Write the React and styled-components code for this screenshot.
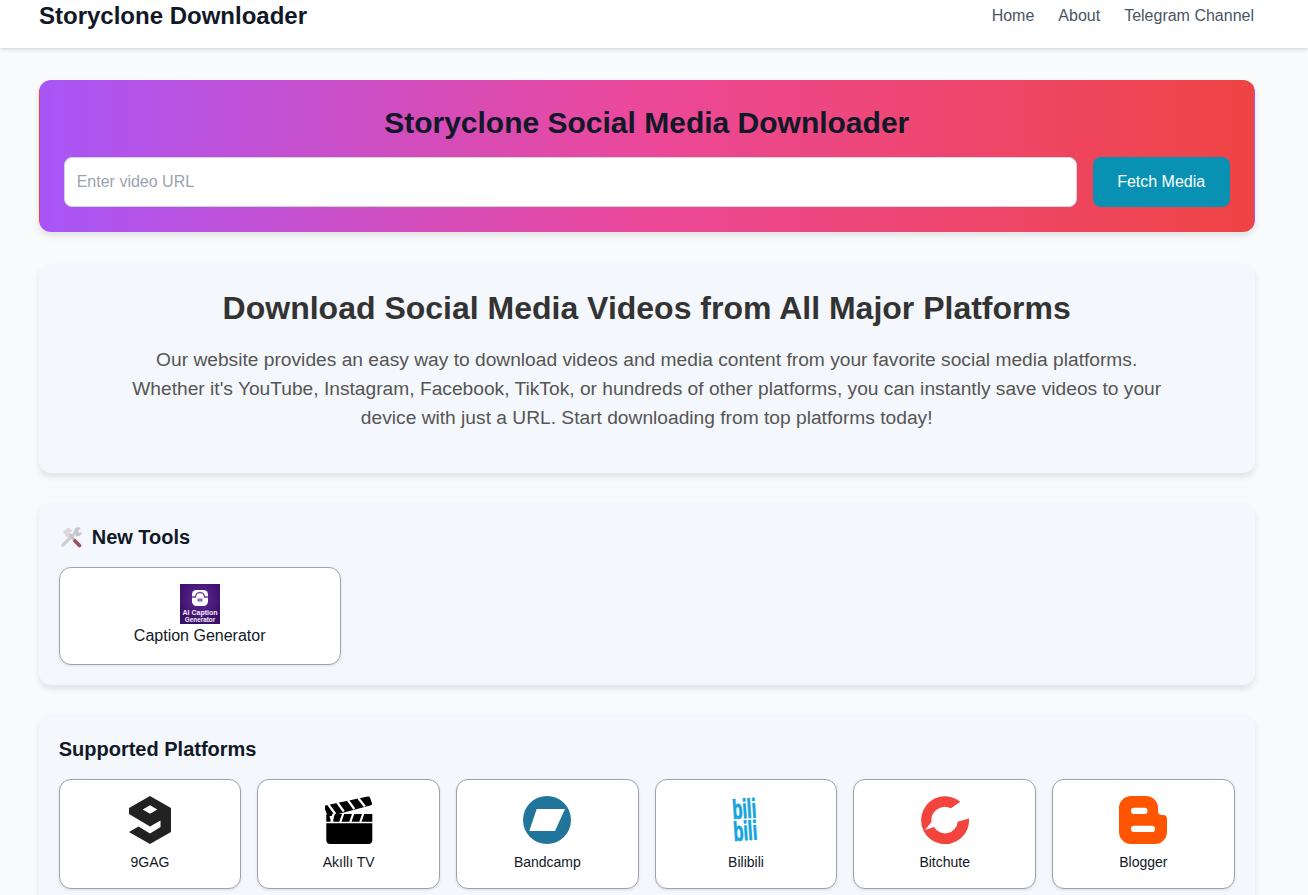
import React from "react";
import styled, { createGlobalStyle } from "styled-components";

const GlobalStyle = createGlobalStyle`
  * {
    box-sizing: border-box;
  }

  html,
  body {
    margin: 0;
    height: 895px;
    overflow: hidden;
    background-color: #f9fafb;
    font-family: "Liberation Sans", Arial, sans-serif;
  }
`;

const NineGagIcon = () => (
  <svg viewBox="0 0 48 48" width="48" height="48">
    <path
      fill="#222222"
      fillRule="evenodd"
      d="M24 0L45 12V36L24 48L3 36L12.5 30.5L24 37.5L34.5 31V24.5L24 30.5L3 18V12ZM24 9.3L16.7 13.5L24 17.7L31.3 13.5Z"
    />
  </svg>
);

const ClapperIcon = () => (
  <svg viewBox="0.7 0 48 48" width="48" height="48">
    <path d="M1 9.5L43.5 0.5Q45 0 45.6 1.5L47.8 7.5Q48 8.8 46.8 9.2L4.6 20.5Q3.3 20.8 3 19.5L0 11.5Q-0.2 10 1 9.5Z" />
    <path d="M2 18.5H4.5L7 25.7H2ZM9 18H48V25.7H9Z" />
    <path d="M2 27.3H48V44A4 4 0 0 1 44 48H6A4 4 0 0 1 2 44Z" />
    <g stroke="#fff" strokeWidth="2.2">
      <path d="M4 8.5L11 18" />
      <path d="M13 6.5L19.5 15.5" />
      <path d="M23.5 4L30 13" />
      <path d="M34 2L40.5 10.5" />
      <path d="M7 26L9.5 17.5" />
      <path d="M16 26L19 17.5" />
      <path d="M26 26L29 17.5" />
      <path d="M36 26L39 17.5" />
    </g>
  </svg>
);

const BandcampIcon = () => (
  <svg viewBox="0 0 48 48" width="48" height="48">
    <circle cx="24" cy="24" r="24" fill="#21759b" />
    <path fill="#fff" d="M13.7 13H42L32 35H6.3Z" />
  </svg>
);

const BiliSvg = styled.svg`
  overflow: visible;
`;

const BiliText = styled.text`
  font-family: "Liberation Sans", Arial, sans-serif;
  font-size: 17px;
  font-weight: 700;
  fill: #13a4dc;
  stroke: #13a4dc;
  stroke-width: 0.5px;
`;

const BilibiliIcon = () => (
  <BiliSvg viewBox="0 0 48 48" width="48" height="48">
    <BiliText transform="translate(11 23) rotate(-4) scale(0.97 1.6)">bili</BiliText>
    <BiliText transform="translate(12 45) rotate(-4) scale(0.97 1.6)">bili</BiliText>
  </BiliSvg>
);

const BitchuteIcon = () => (
  <svg viewBox="0 0 48 48" width="48" height="48">
    <path
      fill="#f2433d"
      d="M39.3 5.7A24 24 0 1 0 48 22.5L36.7 25.7A12.7 12.7 0 0 1 13 31L4 34L10.5 26A13.5 13.5 0 0 1 30 12.3Z"
    />
  </svg>
);

const BloggerIcon = () => (
  <svg viewBox="0 0 48 48" width="48" height="48">
    <path
      fill="#ff5500"
      d="M12 0H27A12 12 0 0 1 39 12V15A4 4 0 0 0 43 19H44A4 4 0 0 1 48 23V36A12 12 0 0 1 36 48H12A12 12 0 0 1 0 36V12A12 12 0 0 1 12 0Z"
    />
    <rect x="12" y="11.7" width="16.5" height="6.3" rx="3.1" fill="#fff" />
    <rect x="12" y="29.7" width="24" height="6.3" rx="3.1" fill="#fff" />
  </svg>
);

const ToolsEmoji = () => (
  <svg viewBox="0 0 22 22" width="22" height="22">
    <path d="M2 19L14 7" stroke="#cfcfd6" strokeWidth="3.4" strokeLinecap="round" />
    <path d="M13 5A4.5 4.5 0 0 1 20 2L17 5L18 7L21 6A4.5 4.5 0 0 1 15 10Z" fill="#c4c4ce" />
    <path d="M9 9L14 14.5" stroke="#cdbfc8" strokeWidth="3.2" strokeLinecap="round" />
    <path d="M2 6L7 1.5L12 5L9 6L8.5 10L6 11.5Z" fill="#dcd6de" />
    <path d="M14 15L18.5 19.5" stroke="#97505a" strokeWidth="3.6" strokeLinecap="round" />
  </svg>
);

const LogoText = styled.text`
  font-family: "Liberation Sans", Arial, sans-serif;
  font-size: ${(props) => props.$size}px;
  font-weight: 700;
  fill: #f3ecf8;
  text-anchor: middle;
`;

const CaptionLogo = () => (
  <svg viewBox="0 0 40 40" width="40" height="40">
    <defs>
      <radialGradient id="captionBg" cx="50%" cy="38%" r="60%">
        <stop offset="0%" stopColor="#5f2a95" />
        <stop offset="100%" stopColor="#3a0f68" />
      </radialGradient>
    </defs>
    <rect width="40" height="40" fill="url(#captionBg)" />
    <rect x="12" y="6" width="16" height="16" rx="4.5" fill="#fff" />
    <path d="M12 13H15.5A4.5 4.5 0 0 1 24.5 13H28" fill="none" stroke="#6a3c9c" strokeWidth="1.3" />
    <rect x="17.5" y="14.5" width="5" height="3" fill="#8a68b4" />
    <LogoText x="20" y="30.5" $size="7">
      AI Caption
    </LogoText>
    <LogoText x="20" y="37.5" $size="6.4">
      Generator
    </LogoText>
  </svg>
);

const PLATFORMS = [
  { name: "9GAG", icon: <NineGagIcon /> },
  { name: "Akıllı TV", icon: <ClapperIcon /> },
  { name: "Bandcamp", icon: <BandcampIcon /> },
  { name: "Bilibili", icon: <BilibiliIcon /> },
  { name: "Bitchute", icon: <BitchuteIcon /> },
  { name: "Blogger", icon: <BloggerIcon /> },
];

const App = () => {
  return (
    <>
      <GlobalStyle />
      <Header>
        <Brand>Storyclone Downloader</Brand>
        <Nav>
          <NavLink href="#home">Home</NavLink>
          <NavLink href="#about">About</NavLink>
          <NavLink href="#telegram">Telegram Channel</NavLink>
        </Nav>
      </Header>
      <Main>
        <Hero>
          <HeroTitle>Storyclone Social Media Downloader</HeroTitle>
          <SearchRow>
            <UrlInput type="text" placeholder="Enter video URL" />
            <FetchButton type="button">Fetch Media</FetchButton>
          </SearchRow>
        </Hero>

        <InfoCard>
          <InfoTitle>Download Social Media Videos from All Major Platforms</InfoTitle>
          <InfoText>
            Our website provides an easy way to download videos and media content from your favorite social media
            platforms.
            <br />
            Whether it's YouTube, Instagram, Facebook, TikTok, or hundreds of other platforms, you can instantly save
            videos to your device with just a URL. Start downloading from top platforms today!
          </InfoText>
        </InfoCard>

        <Section>
          <SectionTitle>
            <ToolsEmoji />
            New Tools
          </SectionTitle>
          <ToolGrid>
            <ToolCard href="#caption">
              <CaptionLogo />
              <ToolName>Caption Generator</ToolName>
            </ToolCard>
          </ToolGrid>
        </Section>

        <Section>
          <SectionTitle>Supported Platforms</SectionTitle>
          <PlatformGrid>
            {PLATFORMS.map((platform) => (
              <PlatformCard key={platform.name} href="#platform">
                {platform.icon}
                <PlatformName>{platform.name}</PlatformName>
              </PlatformCard>
            ))}
          </PlatformGrid>
        </Section>
      </Main>
    </>
  );
};

export default App;

const Header = styled.header`
  display: flex;
  align-items: flex-start;
  justify-content: space-between;
  height: 48px;
  padding: 0 54px 0 39px;
  background-color: #fff;
  box-shadow: 0 1px 4px rgba(0, 0, 0, 0.18);
`;

const Brand = styled.div`
  font-size: 24px;
  line-height: 32px;
  font-weight: 700;
  color: #111827;
`;

const Nav = styled.nav`
  display: flex;
  gap: 24px;
`;

const NavLink = styled.a`
  font-size: 16px;
  line-height: 31px;
  color: #4b5563;
  text-decoration: none;
`;

const Main = styled.main`
  width: 1216px;
  margin-left: 38.7px;
  padding-top: 32px;
`;

const Hero = styled.section`
  padding: 24px;
  border: 1px solid transparent;
  border-radius: 12px;
  background-image: linear-gradient(to right, #a855f7, #ec4899, #ef4444);
  box-shadow: 0 4px 6px rgba(0, 0, 0, 0.1);
`;

const HeroTitle = styled.h1`
  margin: 0 0 16px;
  font-size: 30px;
  line-height: 36px;
  font-weight: 700;
  text-align: center;
  color: #111827;
`;

const SearchRow = styled.div`
  display: flex;
  gap: 16px;
`;

const UrlInput = styled.input`
  flex: 1;
  height: 50px;
  padding: 0 12px;
  border: 1px solid #d1d5db;
  border-radius: 8px;
  background-color: #fff;
  font-family: inherit;
  font-size: 16px;

  &::placeholder {
    color: #9ca3af;
    opacity: 1;
  }
`;

const FetchButton = styled.button`
  width: 137px;
  height: 50px;
  border: 0;
  border-radius: 8px;
  background-color: #0891b2;
  color: #fff;
  font-family: inherit;
  font-size: 16px;
`;

const InfoCard = styled.section`
  margin-top: 32px;
  height: 209px;
  padding: 24px;
  border-radius: 12px;
  background-color: #f4f7fb;
  box-shadow: 0 4px 6px rgba(0, 0, 0, 0.1);
  text-align: center;
`;

const InfoTitle = styled.h2`
  margin: 0 0 18px;
  font-size: 32px;
  line-height: 40px;
  font-weight: 700;
  color: #333;
`;

const InfoText = styled.p`
  max-width: 1040px;
  margin: 0 auto;
  font-size: 19.2px;
  line-height: 28.8px;
  color: #555;
`;

const Section = styled.section`
  margin-top: 30px;
  padding: 20px;
  border-radius: 12px;
  background-color: #f4f7fb;
  box-shadow: 0 4px 6px rgba(0, 0, 0, 0.1);
`;

const SectionTitle = styled.h3`
  display: flex;
  align-items: center;
  gap: 9px;
  margin: 0 0 16px;
  font-size: 20px;
  line-height: 28px;
  font-weight: 700;
  color: #111827;

  svg {
    margin-left: 2px;
  }
`;

const ToolGrid = styled.div`
  display: grid;
  grid-template-columns: repeat(4, 1fr);
  gap: 16px;
`;

const PlatformGrid = styled.div`
  display: grid;
  grid-template-columns: repeat(6, 1fr);
  gap: 16px;
`;

const ToolCard = styled.a`
  display: flex;
  flex-direction: column;
  align-items: center;
  height: 98px;
  padding: 16px;
  border: 1px solid #9ca3af;
  border-radius: 12px;
  background-color: #fff;
  box-shadow: 0 1px 3px rgba(0, 0, 0, 0.1);
  color: #111827;
  text-decoration: none;
`;

const ToolName = styled.span`
  font-size: 16px;
  line-height: 24px;
`;

const PlatformCard = styled(ToolCard)`
  height: 110px;
`;

const PlatformName = styled.span`
  margin-top: 8px;
  font-size: 14px;
  line-height: 20px;
`;
